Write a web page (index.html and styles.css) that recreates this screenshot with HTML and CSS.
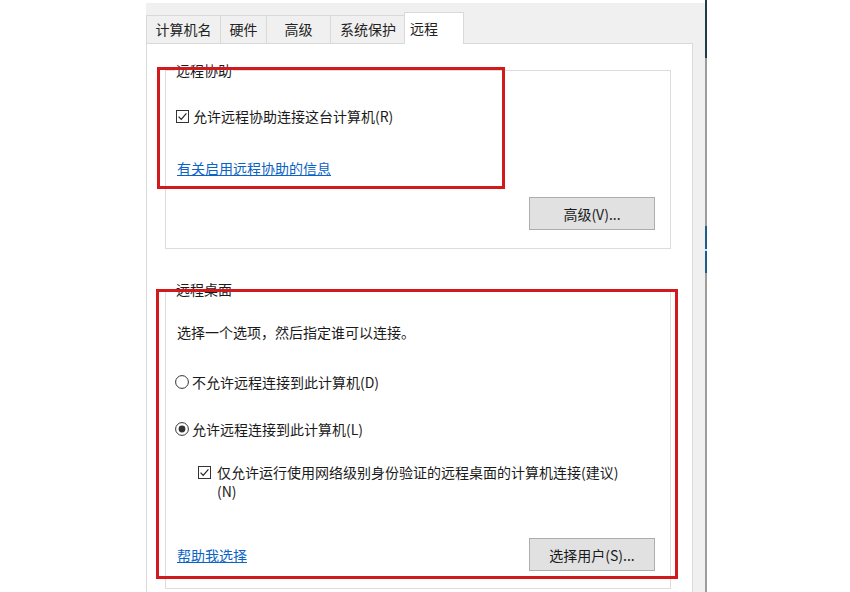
FILE: index.html
```html
<!DOCTYPE html>
<html lang="zh-CN">
<head>
<meta charset="utf-8">
<title>系统属性 - 远程</title>
<link rel="stylesheet" href="styles.css">
</head>
<body>
<div class="page">
  <div class="left-space"></div>
  <div class="dialog">
    <div class="tabs">
      <div class="tab tab-1">计算机名</div>
      <div class="tab tab-2">硬件</div>
      <div class="tab tab-3">高级</div>
      <div class="tab tab-4">系统保护</div>
      <div class="tab tab-5 selected">远程</div>
    </div>
    <div class="panel">
      <fieldset class="group group-assist">
        <legend>远程协助</legend>
        <label class="check-row row-assist">
          <svg class="checkbox" width="13" height="13" viewBox="0 0 13 13"><rect x="0.5" y="0.5" width="12" height="12" fill="#fff" stroke="#333"/><path d="M2.6 6.6 L5.2 9.3 L10.4 3.4" fill="none" stroke="#222" stroke-width="1.2"/></svg>
          <span>允许远程协助连接这台计算机(R)</span>
        </label>
        <div class="link-row row-assist-link"><a class="link">有关启用远程协助的信息</a></div>
        <div class="btn-row row-assist-btn"><button class="btn">高级(V)...</button></div>
      </fieldset>

      <fieldset class="group group-desktop">
        <legend>远程桌面</legend>
        <div class="text-row row-intro">选择一个选项，然后指定谁可以连接。</div>
        <label class="check-row row-radio1">
          <svg class="radio" width="14" height="14" viewBox="0 0 14 14"><circle cx="7" cy="7" r="6.4" fill="#fff" stroke="#333"/></svg>
          <span>不允许远程连接到此计算机(D)</span>
        </label>
        <label class="check-row row-radio2">
          <svg class="radio" width="14" height="14" viewBox="0 0 14 14"><circle cx="7" cy="7" r="6.4" fill="#fff" stroke="#333"/><circle cx="7" cy="7" r="3.4" fill="#333"/></svg>
          <span>允许远程连接到此计算机(L)</span>
        </label>
        <label class="check-row nla-row">
          <svg class="checkbox" width="13" height="13" viewBox="0 0 13 13"><rect x="0.5" y="0.5" width="12" height="12" fill="#fff" stroke="#333"/><path d="M2.6 6.6 L5.2 9.3 L10.4 3.4" fill="none" stroke="#222" stroke-width="1.2"/></svg>
          <span class="nla-text">仅允许运行使用网络级别身份验证的远程桌面的计算机连接(建议)<br>(N)</span>
        </label>
        <div class="bottom-row">
          <a class="link">帮助我选择</a>
          <button class="btn">选择用户(S)...</button>
        </div>
      </fieldset>
    </div>
  </div>
  <div class="edge"></div>
  <div class="right-space"></div>
</div>
<div class="mark mark-1"></div>
<div class="mark mark-2"></div>
</body>
</html>
```

FILE: styles.css
```css
html, body {
  margin: 0;
  padding: 0;
}
body {
  width: 850px;
  height: 592px;
  overflow: hidden;
  background: #ffffff;
  font-family: "Noto Sans CJK SC", "Microsoft YaHei", sans-serif;
  font-size: 14px;
  color: #1a1a1a;
  position: relative;
}
.page {
  display: flex;
  height: 592px;
}
.left-space {
  width: 146px;
  flex: none;
}
.dialog {
  width: 559px;
  flex: none;
  margin-top: 3px;
  background: #f0f0f0;
  padding-top: 10px;
  display: flex;
  flex-direction: column;
}
.edge {
  width: 2px;
  flex: none;
  background: linear-gradient(to bottom,
    #1f3c47 0, #1f3c47 58px,
    #9c9c9c 58px, #9c9c9c 226px,
    #1b5e8c 226px, #1b5e8c 249px,
    #cfe3f0 249px, #cfe3f0 251px,
    #1b5e8c 251px, #1b5e8c 273px,
    #9c9c9c 273px, #9c9c9c 100%);
}
.right-space {
  flex: 1;
}

/* tabs */
.tabs {
  display: flex;
  align-items: flex-end;
  height: 30px;
  flex: none;
}
.tab {
  height: 27px;
  line-height: 27px;
  border: 1px solid #d9d9d9;
  border-bottom: none;
  margin-right: -1px;
  background: #f0f0f0;
  color: #222;
  text-align: center;
  box-sizing: content-box;
}
.tab-1 { width: 73px; }
.tab-2 { width: 45px; }
.tab-3 { width: 63px; }
.tab-4 { width: 74px; }
.tab-5 { width: 57px; }
.tab.selected {
  height: 31px;
  line-height: 31px;
  margin-bottom: -1px;
  margin-left: -1px;
  background: #ffffff;
  position: relative;
  z-index: 1;
  text-align: left;
  padding-left: 5px;
  width: 53px;
}

/* panel */
.panel {
  flex: 1;
  box-sizing: border-box;
  width: 547px;
  border: 1px solid #d9d9d9;
  border-bottom: none;
  background: #ffffff;
  padding: 18px 21px 0 18px;
}

.group {
  margin: 0;
  border: 1px solid #dcdcdc;
  padding: 0 15px 18px 10px;
  min-width: 0;
}
.group legend {
  padding: 0 1px;
  margin-left: -1px;
  line-height: 16px;
  font-size: 14px;
  color: #1a1a1a;
}
.group-desktop {
  margin-top: 32px;
  padding-bottom: 17px;
}

.check-row {
  display: flex;
  align-items: center;
  height: 20px;
  line-height: 20px;
}
.checkbox { flex: none; margin-right: 4px; }
.radio { flex: none; margin-left: -1px; margin-right: 3px; }

.row-assist { margin-top: 28px; }
.link-row { line-height: 20px; padding-left: 1px; }
.row-assist-link { margin-top: 32px; }
.btn-row {
  display: flex;
  justify-content: flex-end;
}
.row-assist-btn { margin-top: 19px; }

.link {
  color: #0b63c4;
  text-decoration: underline;
  cursor: pointer;
}

.btn {
  width: 126px;
  height: 33px;
  background: #e1e1e1;
  border: 1px solid #adadad;
  font-family: inherit;
  font-size: 14px;
  color: #1a1a1a;
  padding: 0;
}

.text-row { line-height: 20px; padding-left: 1px; }
.row-intro { margin-top: 25px; }
.row-radio1 { margin-top: 30px; }
.row-radio2 { margin-top: 27px; }

.nla-row {
  margin-top: 24px;
  margin-left: 22px;
  height: auto;
  align-items: flex-start;
  line-height: 19px;
}
.nla-row .checkbox { margin-top: 3px; margin-right: 6px; }

.bottom-row {
  margin-top: 37px;
  display: flex;
  justify-content: space-between;
  align-items: flex-end;
  padding-left: 1px;
}
.bottom-row .link { line-height: 20px; margin-bottom: 6px; }

/* annotation rectangles */
.mark {
  position: absolute;
  border: 3px solid #d2191c;
  box-sizing: border-box;
  pointer-events: none;
}
.mark-1 {
  left: 157px;
  top: 67px;
  width: 348px;
  height: 122px;
}
.mark-2 {
  left: 156px;
  top: 289px;
  width: 522px;
  height: 290px;
}
```
